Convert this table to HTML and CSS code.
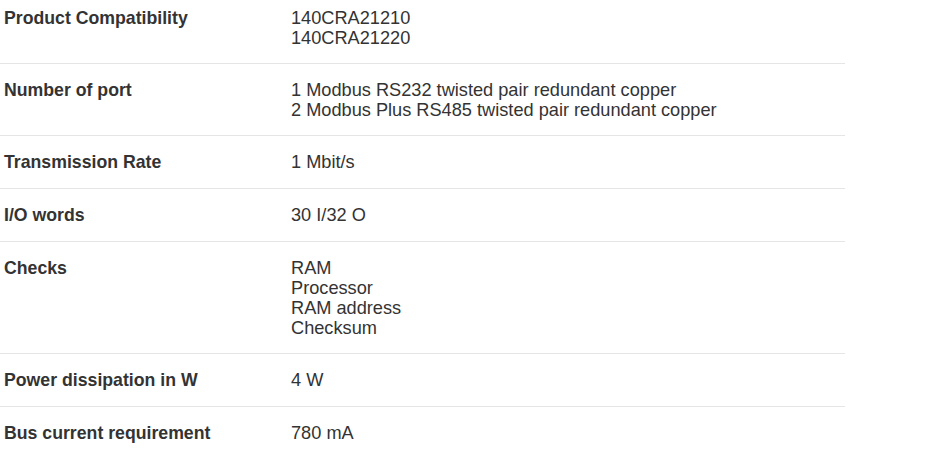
FILE: index.html
```html
<!DOCTYPE html>
<html>
<head>
<meta charset="utf-8">
<link rel="stylesheet" href="styles.css">
</head>
<body>
<div class="specs">
  <div class="row first">
    <div class="label">Product Compatibility</div>
    <div class="value">140CRA21210<br>140CRA21220</div>
  </div>
  <div class="row">
    <div class="label">Number of port</div>
    <div class="value">1 Modbus RS232 twisted pair redundant copper<br>2 Modbus Plus RS485 twisted pair redundant copper</div>
  </div>
  <div class="row">
    <div class="label">Transmission Rate</div>
    <div class="value">1 Mbit/s</div>
  </div>
  <div class="row">
    <div class="label">I/O words</div>
    <div class="value">30 I/32 O</div>
  </div>
  <div class="row">
    <div class="label">Checks</div>
    <div class="value">RAM<br>Processor<br>RAM address<br>Checksum</div>
  </div>
  <div class="row">
    <div class="label">Power dissipation in W</div>
    <div class="value">4 W</div>
  </div>
  <div class="row">
    <div class="label">Bus current requirement</div>
    <div class="value">780 mA</div>
  </div>
</div>
</body>
</html>
```
FILE: styles.css
```css
html, body {
  margin: 0;
  padding: 0;
  background: #ffffff;
}
body {
  font-family: "Liberation Sans", Arial, sans-serif;
  font-size: 18px;
  line-height: 20px;
  color: #333333;
}
.specs {
  width: 845px;
}
.row {
  display: flex;
  padding: 16px 0 15px 0;
  border-bottom: 1px solid #e5e5e5;
}
.row.first {
  padding-top: 8px;
}
.label {
  width: 287px;
  padding-left: 4px;
  font-weight: bold;
  font-size: 17.7px;
  line-height: 21px;
  flex: none;
}
.value {
  flex: 1;
  font-size: 18.2px;
}
```
